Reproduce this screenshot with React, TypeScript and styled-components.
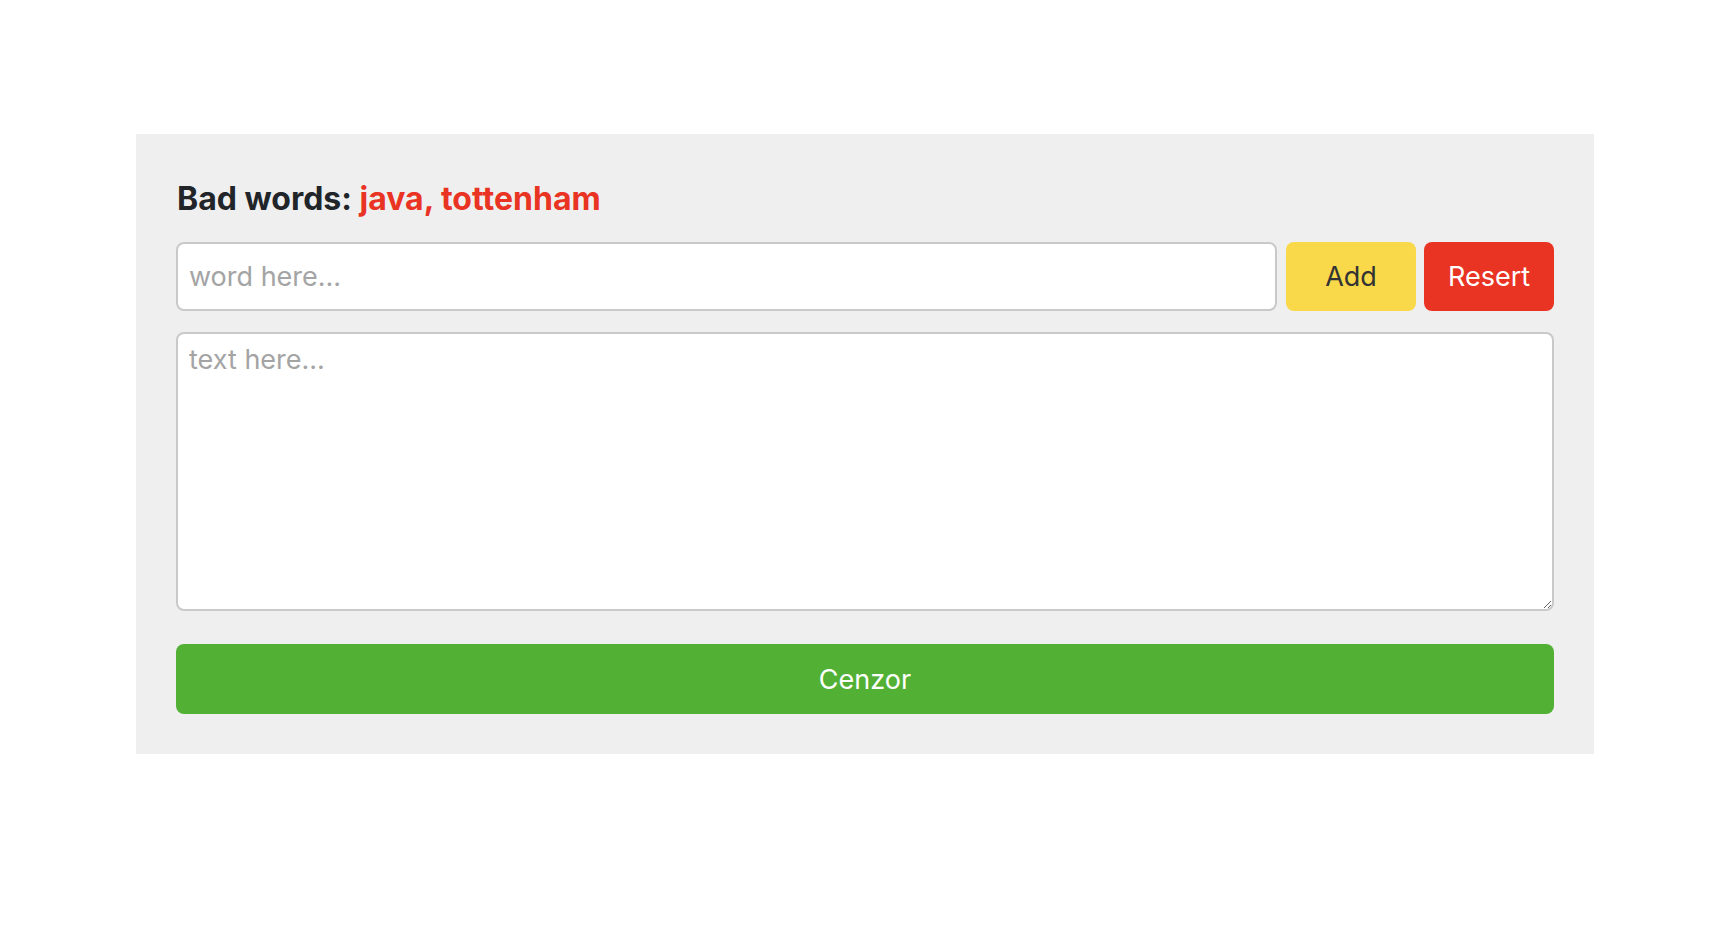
import React, { useState } from "react";
import styled, { createGlobalStyle } from "styled-components";

const Global = createGlobalStyle`
  html, body { margin: 0; padding: 0; background: #ffffff; }
  body { font-family: Inter, "Noto Sans", Arial, sans-serif; }
  * { box-sizing: border-box; }
`;

const Page = styled.div`
  padding: 134px 130px 0 136px;
`;

const Panel = styled.section`
  background: #efefef;
  padding: 40px;
  display: flex;
  flex-direction: column;
`;

const Heading = styled.h2`
  margin: 0 0 18px 1px;
  font-size: 32px;
  font-weight: 700;
  color: #212529;
  line-height: 50px;
  letter-spacing: 0;
`;

const Bad = styled.span`
  color: #e93323;
`;

const Row = styled.div`
  display: flex;
  gap: 8px;
  height: 69px;
`;

const WordInput = styled.input`
  flex: 1;
  min-width: 0;
  margin-right: 1px;
  height: 100%;
  border: 2px solid #c9c9c9;
  border-radius: 8px;
  background: #fff;
  padding: 0 11px;
  font-family: inherit;
  font-size: 27px;
  color: #212529;
  outline: none;
  &::placeholder { color: #a4a4a4; }
`;

const Btn = styled.button<{ $bg: string; $fg: string }>`
  width: 130px;
  height: 100%;
  border: none;
  border-radius: 8px;
  background: ${(p) => p.$bg};
  color: ${(p) => p.$fg};
  font-family: inherit;
  font-size: 27px;
  cursor: pointer;
`;

const TextArea = styled.textarea`
  display: block;
  margin-top: 21px;
  height: 279px;
  width: 100%;
  border: 2px solid #c9c9c9;
  border-radius: 8px;
  background: #fff;
  padding: 9px 11px;
  font-family: inherit;
  font-size: 27px;
  color: #212529;
  outline: none;
  resize: vertical;
  &::placeholder { color: #a4a4a4; }
`;

const Submit = styled.button`
  margin-top: 33px;
  height: 70px;
  width: 100%;
  border: none;
  border-radius: 8px;
  background: #52b135;
  color: #ffffff;
  font-family: inherit;
  font-size: 27px;
  cursor: pointer;
`;

export default function App() {
  const [words, setWords] = useState<string[]>(["java", "tottenham"]);
  const [word, setWord] = useState("");
  const [text, setText] = useState("");
  return (
    <>
      <Global />
      <Page>
        <Panel>
          <Heading>
            Bad words: <Bad>{words.join(", ")}</Bad>
          </Heading>
          <Row>
            <WordInput
              placeholder="word here..."
              value={word}
              onChange={(e) => setWord(e.target.value)}
            />
            <Btn
              $bg="#f9d84a"
              $fg="#333333"
              onClick={() => {
                if (word.trim()) setWords([...words, word.trim()]);
                setWord("");
              }}
            >
              Add
            </Btn>
            <Btn $bg="#e93323" $fg="#ffffff" onClick={() => setWords([])}>
              Resert
            </Btn>
          </Row>
          <TextArea
            placeholder="text here..."
            value={text}
            onChange={(e) => setText(e.target.value)}
          />
          <Submit>Cenzor</Submit>
        </Panel>
      </Page>
    </>
  );
}
